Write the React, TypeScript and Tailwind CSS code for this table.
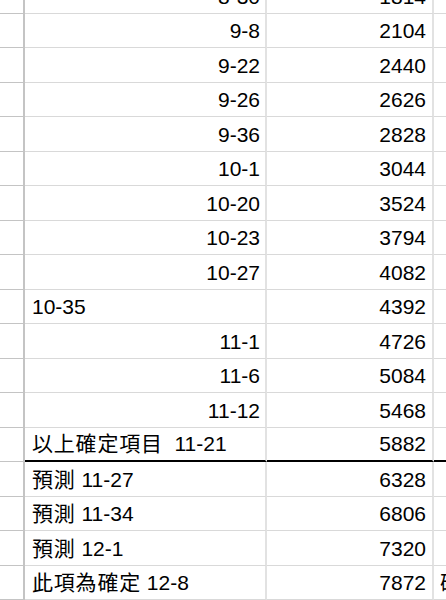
import React from "react";

type Row = { b: string; bAlign: "left" | "right"; c: string; d?: string; thick?: boolean };

const rows: Row[] = [
  { b: "8-30", bAlign: "right", c: "1814" },
  { b: "9-8", bAlign: "right", c: "2104" },
  { b: "9-22", bAlign: "right", c: "2440" },
  { b: "9-26", bAlign: "right", c: "2626" },
  { b: "9-36", bAlign: "right", c: "2828" },
  { b: "10-1", bAlign: "right", c: "3044" },
  { b: "10-20", bAlign: "right", c: "3524" },
  { b: "10-23", bAlign: "right", c: "3794" },
  { b: "10-27", bAlign: "right", c: "4082" },
  { b: "10-35", bAlign: "left", c: "4392" },
  { b: "11-1", bAlign: "right", c: "4726" },
  { b: "11-6", bAlign: "right", c: "5084" },
  { b: "11-12", bAlign: "right", c: "5468" },
  { b: "以上確定項目\u00a0\u00a011-21", bAlign: "left", c: "5882", thick: true },
  { b: "預測 11-27", bAlign: "left", c: "6328" },
  { b: "預測 11-34", bAlign: "left", c: "6806" },
  { b: "預測 12-1", bAlign: "left", c: "7320" },
  { b: "此項為確定 12-8", bAlign: "left", c: "7872", d: "確定" },
  { b: "", bAlign: "left", c: "" },
];

function Txt({ s }: { s: string }) {
  const parts = s.split(/([\u3400-\u9fff]+)/).filter((p) => p.length > 0);
  return (
    <span className="whitespace-pre">
      {parts.map((p, i) =>
        /[\u3400-\u9fff]/.test(p) ? (
          <span key={i} className="tracking-[0.8px]">
            {p}
          </span>
        ) : (
          <span key={i}>{p}</span>
        )
      )}
    </span>
  );
}

export default function App() {
  return (
    <div
      className="w-[446px] h-[600px] overflow-hidden bg-white text-black"
      style={{ fontFamily: '"Liberation Sans", Arial, "Noto Sans CJK TC", sans-serif' }}
    >
      <div className="-mt-[21px] flex flex-col">
        {rows.map((r, i) => {
          const h = i % 2 === 0 ? "h-[35px]" : "h-[34px]";
          const line = r.thick ? "border-b-2 border-b-black" : "border-b border-b-[#d9d9d9]";
          return (
            <div key={i} className={`flex ${h} text-[21px] leading-none`}>
              <div className="w-[25px] shrink-0 border-r-2 border-r-[#c4c4c4] border-b border-b-[#c4c4c4]" />
              <div
                className={`w-[242px] shrink-0 flex items-end pb-[6px] border-r-2 border-r-[#e2e2e2] ${line} ${
                  r.bAlign === "right" ? "justify-end pr-[5px]" : "justify-start pl-[7px]"
                } whitespace-nowrap`}
              >
                <Txt s={r.b} />
              </div>
              <div
                className={`w-[167px] shrink-0 flex items-end justify-end pb-[6px] pr-[6px] border-r-2 border-r-[#e2e2e2] ${line}`}
              >
                {r.c}
              </div>
              <div className={`flex-1 min-w-0 flex items-end pb-[6px] pl-[6px] overflow-hidden whitespace-nowrap ${line}`}>
                {r.d ? <Txt s={r.d} /> : ""}
              </div>
            </div>
          );
        })}
      </div>
    </div>
  );
}
